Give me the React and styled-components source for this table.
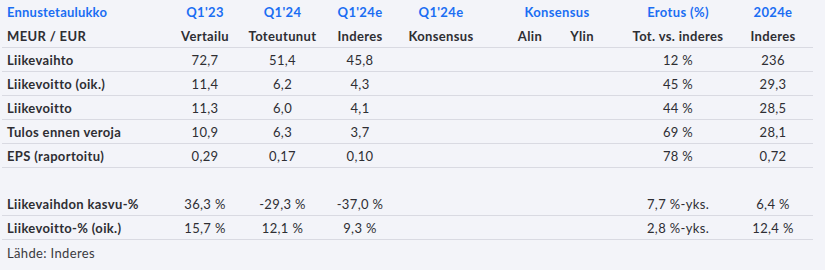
import React from "react";
import styled, { createGlobalStyle } from "styled-components";

const GlobalStyle = createGlobalStyle`
    html, body {
        margin: 0;
        padding: 0;
        background: #f3f4f9;
    }
    body {
        font-family: Lato, "Open Sans", sans-serif;
        color: #2e2e33;
    }
`;

// column widths: label, Q1'23, Q1'24, Q1'24e, konsensus, alin, ylin, erotus, 2024e
const cols = [164, 78, 77, 78, 106, 50, 54, 138, 52];
const pads = [0, 0, 0, 0, 22, 0, 0, 0, 0];

const rows = [
    { label: "Liikevaihto", values: ["72,7", "51,4", "45,8", "", "", "", "12 %", "236"] },
    { label: "Liikevoitto (oik.)", values: ["11,4", "6,2", "4,3", "", "", "", "45 %", "29,3"] },
    { label: "Liikevoitto", values: ["11,3", "6,0", "4,1", "", "", "", "44 %", "28,5"] },
    { label: "Tulos ennen veroja", values: ["10,9", "6,3", "3,7", "", "", "", "69 %", "28,1"] },
    { label: "EPS (raportoitu)", values: ["0,29", "0,17", "0,10", "", "", "", "78 %", "0,72"] },
];

const ratioRows = [
    { label: "Liikevaihdon kasvu-%", values: ["36,3 %", "-29,3 %", "-37,0 %", "", "", "", "7,7 %-yks.", "6,4 %"] },
    { label: "Liikevoitto-% (oik.)", values: ["15,7 %", "12,1 %", "9,3 %", "", "", "", "2,8 %-yks.", "12,4 %"] },
];

const Row = ({ label, values, lined = true }) => (
    <Line $lined={lined}>
        <Label>{label}</Label>
        {values.map((v, i) => (
            <Cell key={i} $w={cols[i + 1]} $pad={pads[i + 1]}>{v}</Cell>
        ))}
    </Line>
);

export default function App() {
    return (
        <Frame>
            <GlobalStyle />
            <Line $lined={false}>
                <Title>Ennustetaulukko</Title>
                <Head $w={cols[1]}>Q1'23</Head>
                <Head $w={cols[2]}>Q1'24</Head>
                <Head $w={cols[3]}>Q1'24e</Head>
                <Head $w={cols[4]} $pad={pads[4]}>Q1'24e</Head>
                <Head $w={cols[5] + cols[6]}>Konsensus</Head>
                <Head $w={cols[7]}>Erotus (%)</Head>
                <Head $w={cols[8]}>2024e</Head>
            </Line>
            <Line>
                <Label>MEUR / EUR</Label>
                <SubHead $w={cols[1]}>Vertailu</SubHead>
                <SubHead $w={cols[2]}>Toteutunut</SubHead>
                <SubHead $w={cols[3]}>Inderes</SubHead>
                <SubHead $w={cols[4]} $pad={pads[4]}>Konsensus</SubHead>
                <SubHead $w={cols[5]}>Alin</SubHead>
                <SubHead $w={cols[6]}>Ylin</SubHead>
                <SubHead $w={cols[7]}>Tot. vs. inderes</SubHead>
                <SubHead $w={cols[8]}>Inderes</SubHead>
            </Line>
            {rows.map((r) => (
                <Row key={r.label} {...r} />
            ))}
            <Spacer />
            {ratioRows.map((r) => (
                <Row key={r.label} {...r} />
            ))}
            <Source>Lähde: Inderes</Source>
        </Frame>
    );
}

const Frame = styled.div`
    display: flex;
    flex-direction: column;
    width: 811px;
    margin-left: 2px;
`;

const Line = styled.div`
    display: flex;
    align-items: center;
    height: 23px;
    border-bottom: 1px solid ${(p) => (p.$lined === false ? "transparent" : "#d9dae2")};
    font-size: 13px;
    letter-spacing: 0.35px;
`;

const Label = styled.div`
    width: ${cols[0]}px;
    padding-left: 5px;
    box-sizing: border-box;
    font-weight: 700;
    white-space: nowrap;
`;

const Title = styled(Label)`
    color: #1b6ef3;
    letter-spacing: 0.2px;
`;

const Cell = styled.div`
    width: ${(p) => p.$w}px;
    padding-right: ${(p) => p.$pad || 0}px;
    box-sizing: border-box;
    text-align: center;
    white-space: nowrap;
`;

const Head = styled(Cell)`
    color: #1b6ef3;
    font-weight: 700;
`;

const SubHead = styled(Cell)`
    font-weight: 700;
`;

const Spacer = styled.div`
    height: 24px;
`;

const Source = styled.div`
    height: 26px;
    display: flex;
    align-items: center;
    padding-left: 5px;
    font-size: 13px;
    letter-spacing: 0.35px;
    color: #3a3a40;
`;
